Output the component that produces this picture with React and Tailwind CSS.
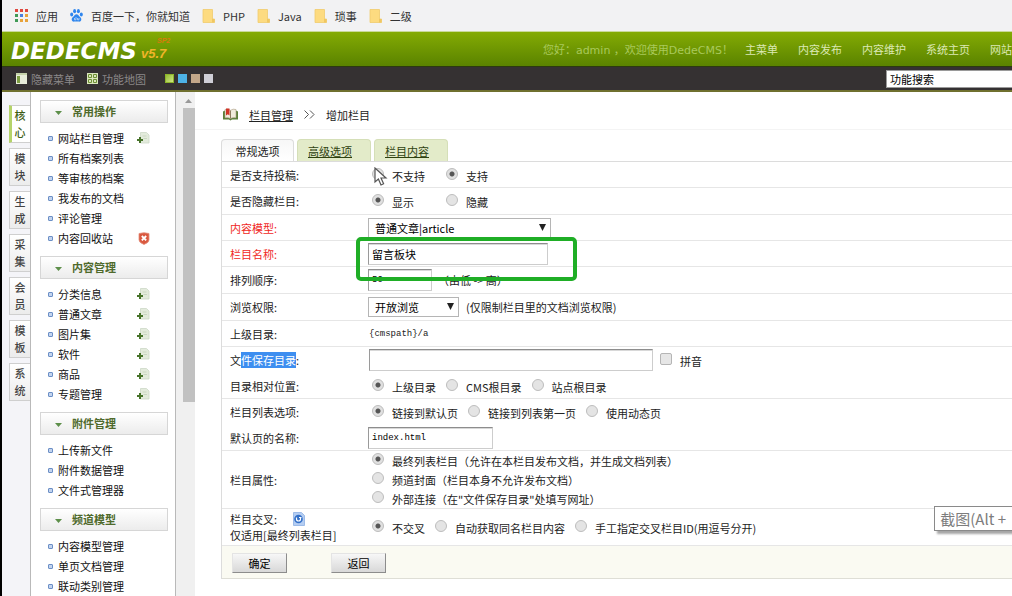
import clsx from 'clsx';

const bookmarks = [
    { icon: 'apps', label: '应用' },
    { icon: 'paw', label: '百度一下，你就知道' },
    { icon: 'folder', label: 'PHP' },
    { icon: 'folder', label: 'Java' },
    { icon: 'folder', label: '琐事' },
    { icon: 'folder', label: '二级' },
];

const sideTabs = ['核心', '模块', '生成', '采集', '会员', '模板', '系统'];

const menuGroups = [
    {
        title: '常用操作',
        items: [
            { label: '网站栏目管理', action: 'add' },
            { label: '所有档案列表' },
            { label: '等审核的档案' },
            { label: '我发布的文档' },
            { label: '评论管理' },
            { label: '内容回收站', action: 'trash' },
        ],
    },
    {
        title: '内容管理',
        items: [
            { label: '分类信息', action: 'add' },
            { label: '普通文章', action: 'add' },
            { label: '图片集', action: 'add' },
            { label: '软件', action: 'add' },
            { label: '商品', action: 'add' },
            { label: '专题管理', action: 'add' },
        ],
    },
    {
        title: '附件管理',
        items: [{ label: '上传新文件' }, { label: '附件数据管理' }, { label: '文件式管理器' }],
    },
    {
        title: '频道模型',
        items: [{ label: '内容模型管理' }, { label: '单页文档管理' }, { label: '联动类别管理' }],
    },
];

const fieldStyle = 'h-[22px] border border-[#cdcdcd] border-t-[#8d8d8d] border-l-[#9a9a9a] bg-white px-[3px] text-black shadow-[inset_0_1px_0_#d8d8d8] outline-none';

function AppsIcon() {
    const colors = ['#e0483e', '#e0483e', '#e0483e', '#3f9a57', '#4a7fe0', '#e8a33b', '#3f9a57', '#e8a33b', '#e8a33b'];
    return (
        <svg width="13" height="13" viewBox="0 0 13 13">
            {colors.map((c, i) => (
                <rect key={i} x={(i % 3) * 5} y={Math.floor(i / 3) * 5} width="3" height="3" fill={c} />
            ))}
        </svg>
    );
}

function PawIcon() {
    return (
        <svg width="13" height="13" viewBox="0 0 13 13" fill="#2f86ee">
            <ellipse cx="1.7" cy="5.6" rx="1.5" ry="2" />
            <ellipse cx="4.6" cy="2.2" rx="1.5" ry="2.1" />
            <ellipse cx="8.4" cy="2.2" rx="1.5" ry="2.1" />
            <ellipse cx="11.3" cy="5.6" rx="1.5" ry="2" />
            <path d="M6.5 5.2c1.6 0 2 1.400 3 2.300s2 1.600 1.800 3.300c-.2 1.600-1.600 2-2.700 1.800-1.400-.2-2.800-.2-4.200 0-1.100.2-2.500-.2-2.700-1.800C1.500 9.100 2.500 8.400 3.500 7.500s1.400-2.300 3-2.300z" />
            <path d="M4.500 9v1.800h1.500V8M7.500 9v1.800H9V9" fill="none" stroke="#d7e8fb" strokeWidth=".7" />
        </svg>
    );
}

function FolderIcon() {
    return (
        <svg width="13" height="14" viewBox="0 0 13 14">
            <path d="M1 .5h9.500v9.500H12.500V13.500H1z" fill="#fddb80" stroke="#f0cb6c" strokeWidth=".8" />
            <path d="M10 10h2.500v3.500H10z" fill="#f0c762" />
        </svg>
    );
}

const bookmarkIcons = { apps: AppsIcon, paw: PawIcon, folder: FolderIcon };

function AddIcon() {
    return (
        <svg width="13" height="13" viewBox="0 0 13 13">
            <path d="M3.500.5h6l2.500 2.500v8H3.500z" fill="#e3ebdc" stroke="#cdd8c6" strokeWidth=".8" />
            <path d="M5.500 4h4M6.500 6.500h3.500" stroke="#c9d6c0" />
            <path d="M3 5v6M0 8h6" stroke="#47732a" strokeWidth="2" />
        </svg>
    );
}

function TrashIcon() {
    return (
        <svg width="12" height="13" viewBox="0 0 12 13">
            <path d="M1 1.500Q6 0 11 1.500V8q0 2.500-5 4.500Q1 10.500 1 8z" fill="#d9583f" stroke="#e58f7c" strokeWidth=".8" />
            <path d="M3.800 4l4.400 4.400M8.200 4L3.800 8.400" stroke="#fff" strokeWidth="1.800" />
        </svg>
    );
}

function BookIcon() {
    return (
        <svg width="15" height="14" viewBox="0 0 15 14">
            <path d="M0 3.500l2-1v7h4.500l1 1 1-1H13v-7l2 1v8H9l-1.500 1-1.500-1H0z" fill="#5b7f3a" />
            <path d="M2 1.500q3-1 5.500.8Q10 .5 13 1.500v8.200q-3-.6-5.500.8Q5 9.100 2 9.700z" fill="#f1ebdc" stroke="#a89b80" strokeWidth=".6" />
            <path d="M3 .5h3.500v7L4.800 6.300 3 7.500z" fill="#cf3326" />
            <path d="M7.500 2.500v8" stroke="#8e7d60" />
        </svg>
    );
}

function HelpIcon() {
    return (
        <svg width="12" height="14" viewBox="0 0 12 14">
            <path d="M.5.500h8l3 3v10H.5z" fill="#b4cdf2" stroke="#9dbbe8" />
            <circle cx="5.500" cy="7" r="4.300" fill="#3370c8" />
            <path d="M3.500 5.500v1.500a2 2 0 0 0 4 0V5M6 5.500h2.500" stroke="#fff" strokeWidth="1.200" fill="none" />
        </svg>
    );
}

function Radio({ name, label, checked, className }) {
    return (
        <label className={clsx('flex items-center gap-2 whitespace-nowrap', className)}>
            <input
                type="radio"
                name={name}
                defaultChecked={checked}
                className="mb-1 size-3 shrink-0 appearance-none rounded-full border border-[#bdbdbd] bg-[#e4e4e4] checked:bg-[radial-gradient(circle,#555_0_2px,#e0e0e0_3px)]"
            />
            {label}
        </label>
    );
}

function RadioRow({ children }) {
    return <div className="ml-1 flex items-center gap-2.5 pt-0.5">{children}</div>;
}

function Row({ label, htmlFor, required, height = 'h-[26px]', line = true, children }) {
    return (
        <div className={clsx('flex items-center', height, line && 'border-b border-[#e6e6e6]')}>
            <div className={clsx('w-[146px] shrink-0 pl-2', required && 'text-[#f0281e]')}>
                {htmlFor ? <label htmlFor={htmlFor}>{label}</label> : label}
            </div>
            <div className="flex min-w-0 flex-1 items-center">{children}</div>
        </div>
    );
}

function Select({ id, className, children }) {
    return (
        <div className={clsx('relative', className)}>
            <select id={id} className="block h-5 w-full appearance-none border border-[#b5b5b5] bg-white px-1.5 text-black outline-none">
                <option>{children}</option>
            </select>
            <svg className="pointer-events-none absolute top-1.5 right-[5px]" width="7" height="7" viewBox="0 0 7 7">
                <path d="M0 0h7L3.500 7z" fill="#222" />
            </svg>
        </div>
    );
}

function BookmarkBar() {
    return (
        <div className="flex h-8 items-center gap-3 border-b border-[#c9d99a] bg-[#f2f2f3] pl-[13px] text-[#333]">
            {bookmarks.map(({ icon, label }) => {
                const Icon = bookmarkIcons[icon];
                return (
                    <a key={label} href="#" className="flex items-center gap-2 whitespace-nowrap">
                        <Icon />
                        {label}
                    </a>
                );
            })}
        </div>
    );
}

function Header() {
    return (
        <header>
            <div className="flex h-[34px] items-center bg-linear-to-b from-[#84ab04] to-[#5a8300] pt-1 pl-[9px]">
                <div className="relative flex items-center font-['DejaVu_Sans',sans-serif] font-bold italic">
                    <span className="text-[23px] leading-6 text-white">DEDECMS</span>
                    <span className="ml-1 pt-1.5 font-['Liberation_Sans',sans-serif] text-[13px] leading-4 text-[#f0b429]">v5.7</span>
                    <span className="absolute -top-1 -right-1 font-['Liberation_Sans',sans-serif] text-[7px] leading-3 text-[#d97a0c]">SP2</span>
                </div>
                <div className="ml-auto flex font-['DejaVu_Sans','Noto_Sans_CJK_SC',sans-serif] whitespace-nowrap text-[#dce9b4]">
                    <span className="mr-3 text-[#a9c95c]">您好：admin ，欢迎使用DedeCMS！</span>
                    <nav className="flex gap-5">
                        <a href="#">主菜单</a>
                        <a href="#">内容发布</a>
                        <a href="#">内容维护</a>
                        <a href="#">系统主页</a>
                        <a href="#">网站</a>
                    </nav>
                </div>
            </div>
            <div className="flex h-[26px] items-center border-t border-b-2 border-t-[#2c3a10] border-b-[#6f702f] bg-[#353132] pl-3.5 text-[#8b8889]">
                <a href="#" className="flex items-center gap-1">
                    <svg width="11" height="11" viewBox="0 0 11 11">
                        <path d="M0 0h11v11H0z" fill="#e7ecd9" />
                        <path d="M1 3h3v7H1z" fill="#7d9d42" />
                        <path d="M0 1h11" stroke="#a3b77c" />
                    </svg>
                    隐藏菜单
                </a>
                <a href="#" className="ml-3 flex items-center gap-1">
                    <svg width="11" height="11" viewBox="0 0 11 11">
                        <path d="M0 0h11v11H0z" fill="#dbe7bd" />
                        <path d="M1.500 1.500h3v3h-3zM6.500 1.500h3v3h-3zM1.500 6.500h3v3h-3zM6.500 6.500h3v3h-3z" fill="none" stroke="#6e8f35" />
                    </svg>
                    功能地图
                </a>
                <div className="ml-[19px] flex gap-1">
                    <button aria-label="绿色" className="size-[9px] bg-linear-to-br from-[#8ab51c] to-[#d9ec8d] ring-1 ring-[#8db52a] ring-inset" />
                    <button aria-label="蓝色" className="size-[9px] bg-[#4db2e6]" />
                    <button aria-label="棕色" className="size-[9px] bg-[#c3a789]" />
                    <button aria-label="灰色" className="size-[9px] bg-[#cfced6]" />
                </div>
                <input
                    type="text"
                    aria-label="功能搜索"
                    defaultValue="功能搜索"
                    className="ml-auto h-[18px] w-[126px] border border-r-0 border-[#9a9a9a] bg-white px-[3px] text-black outline-none"
                />
            </div>
        </header>
    );
}

function SideTabs() {
    return (
        <div className="flex w-7 shrink-0 flex-col gap-[5px] bg-[#f4f4f8] pt-[13px] pl-[7px]">
            {sideTabs.map((tab, i) => (
                <button
                    key={tab}
                    className={clsx(
                        'h-[38px] shrink-0 border border-r-0 border-[#cfcfcf] px-1 leading-[17px] font-medium',
                        i === 0 ? 'border-l-[3px] border-l-[#b5d36a] bg-white pl-0.5 text-[#3f5e14]' : 'bg-linear-to-b from-white to-[#ececec] text-[#444]'
                    )}
                >
                    {tab}
                </button>
            ))}
        </div>
    );
}

function MenuGroup({ title, items }) {
    return (
        <section className="mb-2">
            <h2 className="flex h-[23px] items-center gap-2.5 border border-[#d6d6d6] bg-linear-to-b from-white to-[#ececec] pb-0.5 pl-3.5 font-bold text-[#4f6a2c]">
                <svg width="7" height="4" viewBox="0 0 7 4" className="mt-1">
                    <path d="M0 0h7L3.500 4z" fill="#5d8f4a" />
                </svg>
                {title}
            </h2>
            <ul className="pt-[5px]">
                {items.map(({ label, action }) => (
                    <li key={label} className="flex h-5 items-center pr-[18px] pl-2">
                        <span className="mr-[5px] size-[5px] rounded-[1px] border border-[#6b8fc6] bg-[#c3d4ee]" />
                        <a href="#" className="flex-1 text-[#111]">{label}</a>
                        {action === 'add' && <AddIcon />}
                        {action === 'trash' && <TrashIcon />}
                    </li>
                ))}
            </ul>
        </section>
    );
}

function ColumnForm() {
    return (
        <form className="ml-[26px] border-t border-l border-[#dcdcdc] text-[#222]">
            <Row label="是否支持投稿:">
                <RadioRow>
                    <Radio name="issend" label="不支持" className="w-16" />
                    <Radio name="issend" label="支持" checked />
                </RadioRow>
                <svg className="absolute mb-[-4px] ml-1.5" width="14" height="20" viewBox="0 0 14 20">
                    <path d="M1 1v14l3.400-3 2.600 6 2.600-1.200-2.600-5.800H12z" fill="#fff" stroke="#555" strokeWidth="1.200" />
                </svg>
            </Row>
            <Row label="是否隐藏栏目:" height="h-[27px]">
                <RadioRow>
                    <Radio name="ishidden" label="显示" checked className="w-16" />
                    <Radio name="ishidden" label="隐藏" />
                </RadioRow>
            </Row>
            <Row label="内容模型:" htmlFor="channel" required>
                <Select id="channel" className="w-[183px]">普通文章|article</Select>
            </Row>
            <Row label="栏目名称:" htmlFor="typename" required>
                <div className="relative">
                    <input id="typename" type="text" defaultValue="留言板块" className={clsx(fieldStyle, 'block w-[180px]')} />
                    <div className="pointer-events-none absolute -top-1.5 -left-3 h-11 w-[221px] rounded-[5px] border-4 border-[#1fae26]" />
                </div>
            </Row>
            <Row label="排列顺序:" htmlFor="sortrank" height="h-[27px]">
                <input id="sortrank" type="text" defaultValue="50" className={clsx(fieldStyle, "w-16 font-['Liberation_Mono',monospace] text-[9px]")} />
                <span className="ml-1.5">（由低 -&gt; 高）</span>
            </Row>
            <Row label="浏览权限:" htmlFor="corank" height="h-[27px]">
                <Select id="corank" className="w-[91px]">开放浏览</Select>
                <span className="ml-[7px]">(仅限制栏目里的文档浏览权限)</span>
            </Row>
            <Row label="上级目录:">
                <span className="pl-px font-['Liberation_Mono',monospace] text-[9px]">{'{cmspath}/a'}</span>
            </Row>
            <Row
                label={
                    <>
                        文<span className="bg-[#3d8ef0] text-white">件保存目录</span>:
                    </>
                }
                htmlFor="typedir"
                line={false}
            >
                <input id="typedir" type="text" className={clsx(fieldStyle, 'ml-px w-[284px]')} />
                <label className="ml-[7px] flex items-center gap-2 pt-0.5">
                    <input type="checkbox" className="mb-1 size-3 appearance-none rounded-[2px] border border-[#b5b5b5] bg-[#e6e6e6]" />
                    拼音
                </label>
            </Row>
            <Row label="目录相对位置:">
                <RadioRow>
                    <Radio name="referpath" label="上级目录" checked />
                    <Radio name="referpath" label="CMS根目录" />
                    <Radio name="referpath" label="站点根目录" />
                </RadioRow>
            </Row>
            <Row label="栏目列表选项:" line={false}>
                <RadioRow>
                    <Radio name="isdefault" label="链接到默认页" checked />
                    <Radio name="isdefault" label="链接到列表第一页" />
                    <Radio name="isdefault" label="使用动态页" />
                </RadioRow>
            </Row>
            <Row label="默认页的名称:" htmlFor="defaultname">
                <input
                    id="defaultname"
                    type="text"
                    defaultValue="index.html"
                    className={clsx(fieldStyle, "w-[125px] font-['Liberation_Mono',monospace] text-[9px]")}
                />
            </Row>
            <Row label="栏目属性:" height="h-[58px]">
                <div className="ml-1 flex flex-col">
                    <Radio name="ispart" label="最终列表栏目（允许在本栏目发布文档，并生成文档列表）" checked className="h-[19px]" />
                    <Radio name="ispart" label="频道封面（栏目本身不允许发布文档）" className="h-[19px]" />
                    <Radio name="ispart" label={'外部连接（在"文件保存目录"处填写网址）'} className="h-[19px]" />
                </div>
            </Row>
            <Row
                label={
                    <>
                        <span className="flex items-center gap-4">
                            栏目交叉:
                            <HelpIcon />
                        </span>
                        <span className="block whitespace-nowrap">仅适用[最终列表栏目]</span>
                    </>
                }
                height="h-[37px]"
            >
                <RadioRow>
                    <Radio name="cross" label="不交叉" checked />
                    <Radio name="cross" label="自动获取同名栏目内容" />
                    <Radio name="cross" label="手工指定交叉栏目ID(用逗号分开)" />
                </RadioRow>
            </Row>
            <div className="flex h-[33px] items-center gap-11 border-b border-[#deded6] bg-[#fafaf2] pt-0.5 pl-2.5">
                <FormButton>确定</FormButton>
                <FormButton>返回</FormButton>
            </div>
        </form>
    );
}

function FormButton({ children }) {
    return (
        <button
            type="button"
            className="h-5 w-[55px] border border-t-[#e4e4e4] border-r-[#8c8c8c] border-b-[#8c8c8c] border-l-[#e4e4e4] bg-linear-to-b from-[#f7f7f7] to-[#d8d8d8] leading-4 text-black"
        >
            {children}
        </button>
    );
}

export default function App() {
    return (
        <div className="relative flex h-screen flex-col overflow-hidden border-l-2 border-black bg-white font-['Noto_Sans_CJK_SC',sans-serif] text-[11px] leading-4">
            <BookmarkBar />
            <Header />
            <div className="flex min-h-0 flex-1">
                <SideTabs />
                <aside className="w-[146px] shrink-0 overflow-hidden border-x border-[#b9b9b9] pt-2 pr-[7px] pl-[9px]">
                    {menuGroups.map((group) => (
                        <MenuGroup key={group.title} {...group} />
                    ))}
                </aside>
                <div className="flex w-[19px] shrink-0 flex-col items-end bg-[#f0f0f0] pt-[7px]">
                    <svg className="mr-[3px] mb-[5px]" width="7" height="4" viewBox="0 0 7 4">
                        <path d="M0 4h7L3.500 0z" fill="#999" />
                    </svg>
                    <div className="h-[294px] w-3 bg-[#c1c1c1]" />
                </div>
                <main className="min-w-0 flex-1">
                    <div className="flex h-[38px] items-center border-b border-[#f4f4f4] pt-2 pl-7 text-[#222]">
                        <BookIcon />
                        <a href="#" className="ml-[11px] underline">栏目管理</a>
                        <svg className="mx-[11px]" width="11" height="9" viewBox="0 0 11 9">
                            <path d="M.5.5l4 4-4 4M6 .5l4 4-4 4" fill="none" stroke="#555" />
                        </svg>
                        <span>增加栏目</span>
                    </div>
                    <div className="mt-[9px] ml-[26px] flex h-[22px] gap-[3px] text-[#222]">
                        <button className="w-[73px] rounded-t border border-b-0 border-[#dcdcdc] bg-linear-to-b from-[#f7f7f7] to-white">常规选项</button>
                        <button className="w-[74px] rounded-t border border-b-0 border-[#d5dfb8] bg-[#e3ebc9] pr-2 text-[#2f4210] underline">高级选项</button>
                        <button className="w-[74px] rounded-t border border-b-0 border-[#d5dfb8] bg-[#e3ebc9] pr-2 text-[#2f4210] underline">栏目内容</button>
                    </div>
                    <ColumnForm />
                </main>
            </div>
            <div className="absolute top-[506px] right-0 border border-r-0 border-[#8a8a8a] bg-white pr-1.5 pl-[5px] text-[15px] leading-[23px] whitespace-nowrap text-[#7d7d7d] shadow-[3px_3px_2px_rgba(0,0,0,0.35)]">
                截图(Alt +
            </div>
        </div>
    );
}
